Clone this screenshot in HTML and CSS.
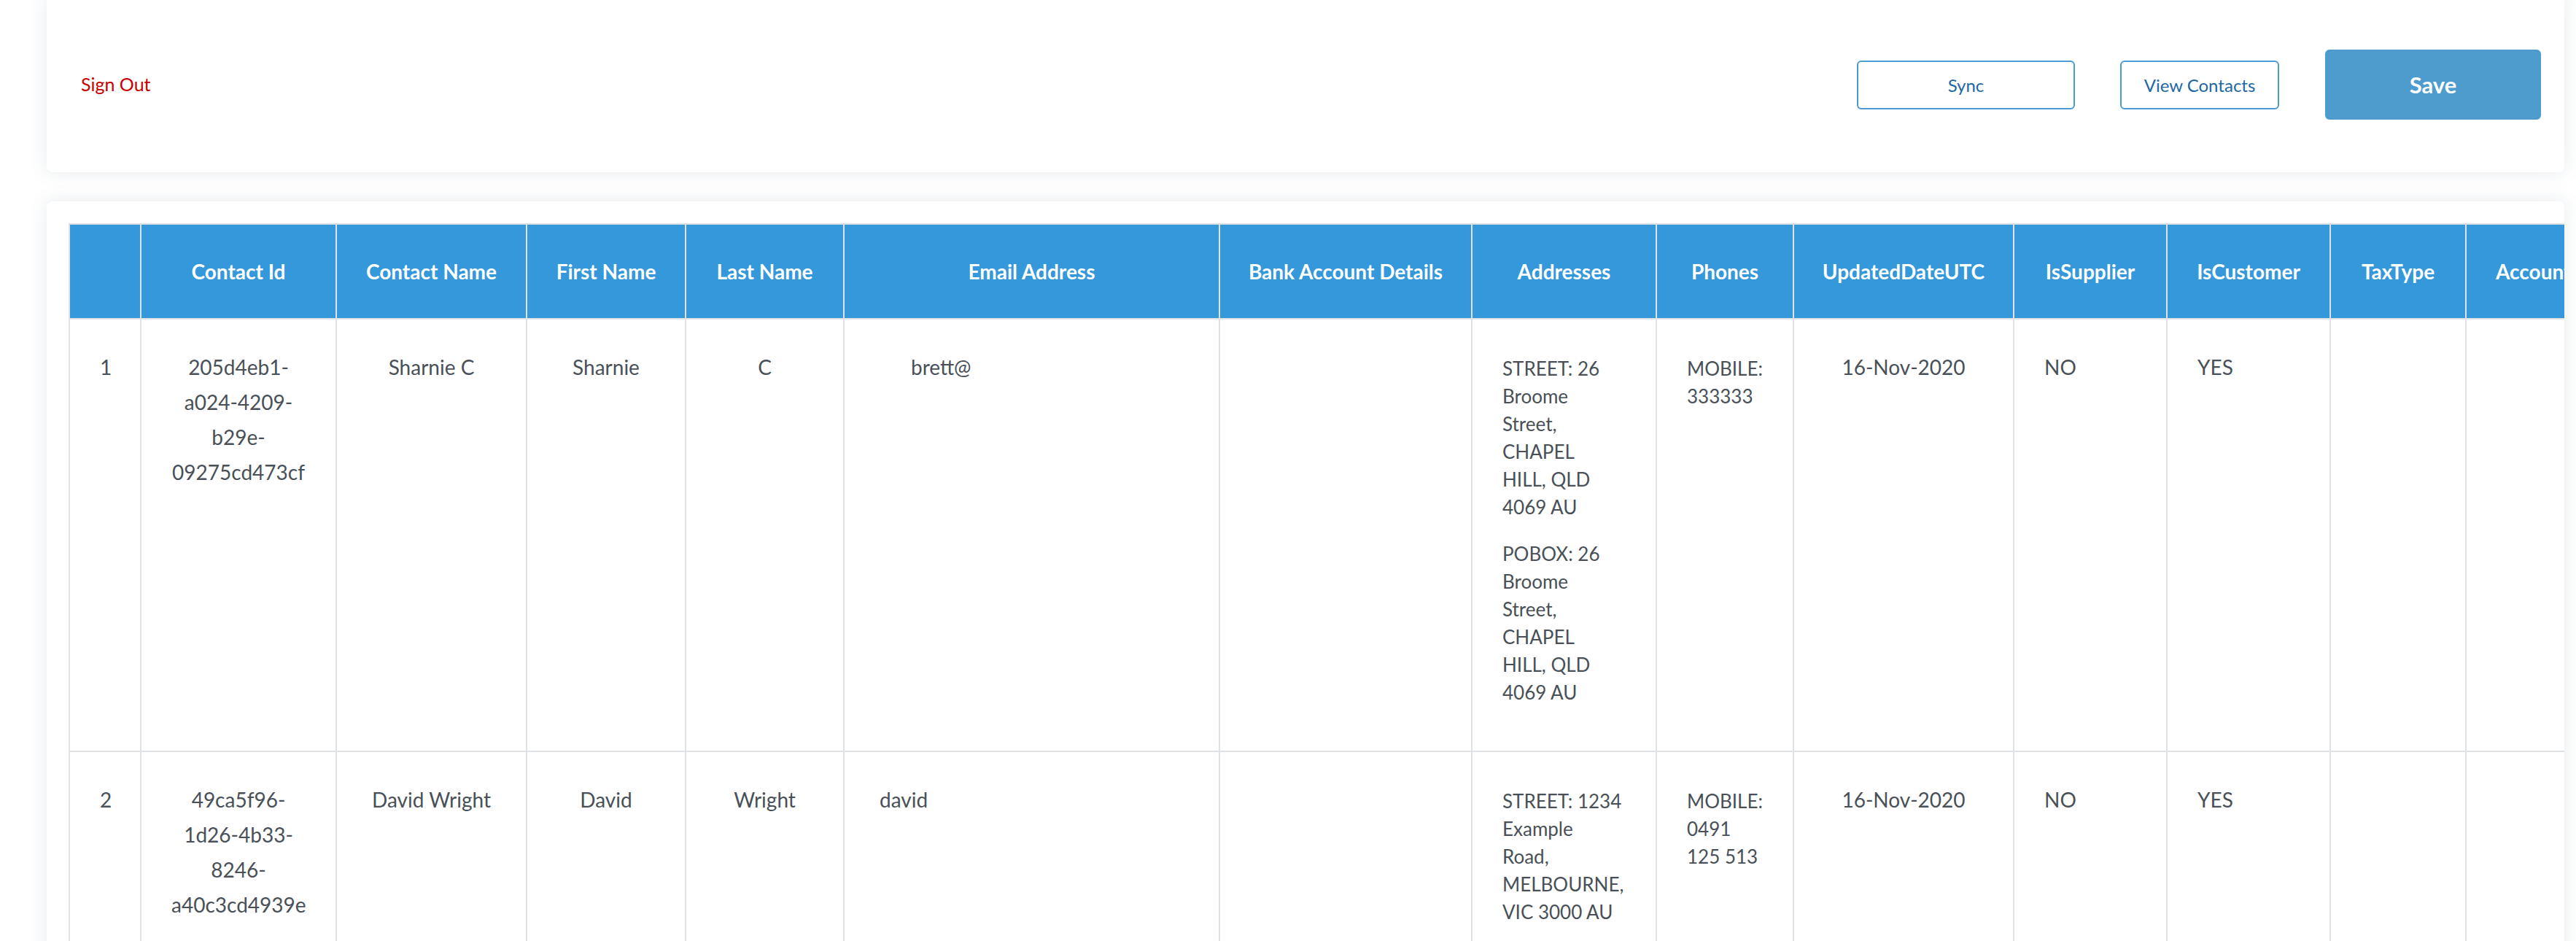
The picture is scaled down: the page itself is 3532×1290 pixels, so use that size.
FILE: index.html
```html
<!DOCTYPE html>
<html lang="en">
<head>
<meta charset="utf-8">
<title>Contacts</title>
<link rel="stylesheet" href="styles.css">
</head>
<body>
<div class="page">
  <header class="card topbar">
    <a class="signout" href="#">Sign Out</a>
    <div class="actions">
      <button class="btn btn-outline btn-sync" type="button">Sync</button>
      <button class="btn btn-outline btn-view" type="button">View Contacts</button>
      <button class="btn btn-primary btn-save" type="button">Save</button>
    </div>
  </header>

  <section class="card table-card">
    <table class="contacts">
      <thead>
        <tr>
          <th class="w-num"></th>
          <th class="w-id">Contact Id</th>
          <th class="w-name">Contact Name</th>
          <th class="w-first">First Name</th>
          <th class="w-last">Last Name</th>
          <th class="w-email">Email Address</th>
          <th class="w-bank">Bank Account Details</th>
          <th class="w-addr">Addresses</th>
          <th class="w-phone">Phones</th>
          <th class="w-date">UpdatedDateUTC</th>
          <th class="w-sup">IsSupplier</th>
          <th class="w-cus">IsCustomer</th>
          <th class="w-tax">TaxType</th>
          <th class="w-acc">AccountNumber</th>
        </tr>
      </thead>
      <tbody>
        <tr>
          <td class="center">1</td>
          <td class="center">205d4eb1-a024-4209-b29e-09275cd473cf</td>
          <td class="center">Sharnie C</td>
          <td class="center">Sharnie</td>
          <td class="center">C</td>
          <td class="email email-a">brett@</td>
          <td></td>
          <td class="multi">
            <div class="stack">
              <p>STREET: 26<br>Broome<br>Street,<br>CHAPEL<br>HILL, QLD<br>4069 AU</p>
              <p>POBOX: 26<br>Broome<br>Street,<br>CHAPEL<br>HILL, QLD<br>4069 AU</p>
            </div>
          </td>
          <td class="multi">
            <div class="stack">
              <p>MOBILE:<br>333333</p>
            </div>
          </td>
          <td class="center">16-Nov-2020</td>
          <td>NO</td>
          <td>YES</td>
          <td></td>
          <td></td>
        </tr>
        <tr>
          <td class="center">2</td>
          <td class="center">49ca5f96-1d26-4b33-8246-a40c3cd4939e</td>
          <td class="center">David Wright</td>
          <td class="center">David</td>
          <td class="center">Wright</td>
          <td class="email email-b">david</td>
          <td></td>
          <td class="multi">
            <div class="stack">
              <p>STREET: 1234<br>Example<br>Road,<br>MELBOURNE,<br>VIC 3000 AU</p>
            </div>
          </td>
          <td class="multi">
            <div class="stack">
              <p>MOBILE:<br>0491<br>125 513</p>
            </div>
          </td>
          <td class="center">16-Nov-2020</td>
          <td>NO</td>
          <td>YES</td>
          <td></td>
          <td></td>
        </tr>
      </tbody>
    </table>
  </section>
</div>
</body>
</html>
```

FILE: styles.css
```css
html, body {
  margin: 0;
  padding: 0;
  background: #ffffff;
}

body {
  font-family: Lato, "Open Sans", sans-serif;
  color: #495057;
  overflow: hidden;
}

.page {
  padding: 0 16px 0 64px;
}

.card {
  background: #ffffff;
  border-radius: 8px;
  box-shadow: 0 0 26px rgba(70, 100, 130, 0.13);
}

/* ---------- top bar ---------- */
.topbar {
  box-sizing: border-box;
  margin-top: -10px;
  height: 246px;
  padding: 10px 32px 7px 47px;
  display: flex;
  align-items: center;
  justify-content: space-between;
}

.signout {
  color: #c80000;
  font-size: 25px;
  text-decoration: none;
}

.actions {
  display: flex;
  align-items: center;
  gap: 62px;
  padding-top: 3px;
}

.btn {
  box-sizing: border-box;
  font-family: Lato, "Open Sans", sans-serif;
  border-radius: 6px;
  cursor: pointer;
  padding: 0;
}

.btn-outline {
  height: 67px;
  background: #ffffff;
  border: 2px solid #4b9bd1;
  color: #1d67a3;
  font-size: 24px;
}

.btn-sync { width: 299px; }
.btn-view { width: 218px; }

.btn-primary {
  width: 296px;
  height: 96px;
  margin-left: 1px;
  background: #4e9ccd;
  border: none;
  color: #ffffff;
  font-size: 31px;
  font-weight: 700;
}

/* ---------- table card ---------- */
.table-card {
  margin-top: 40px;
  padding: 30px;
  height: 1200px;
  overflow: hidden;
}

.contacts {
  table-layout: fixed;
  width: 3588px;
  border-collapse: separate;
  border-spacing: 0;
  border-left: 2px solid #dee2e6;
  border-top: 2px solid #dee2e6;
}

.contacts th,
.contacts td {
  box-sizing: border-box;
  border-right: 2px solid #dee2e6;
  border-bottom: 2px solid #dee2e6;
}

.contacts th {
  height: 130px;
  padding: 0 10px;
  background: #3498db;
  color: #ffffff;
  font-size: 28px;
  font-weight: 700;
  text-align: center;
  vertical-align: middle;
  white-space: nowrap;
  overflow: hidden;
}

.contacts th.w-acc {
  text-align: left;
  padding-left: 40px;
}

.w-num   { width: 98px; }
.w-id    { width: 268px; }
.w-name  { width: 261px; }
.w-first { width: 218px; }
.w-last  { width: 217px; }
.w-email { width: 515px; }
.w-bank  { width: 346px; }
.w-addr  { width: 253px; }
.w-phone { width: 188px; }
.w-date  { width: 302px; }
.w-sup   { width: 210px; }
.w-cus   { width: 224px; }
.w-tax   { width: 186px; }
.w-acc   { width: 300px; }

.contacts td {
  padding: 41px 41px 35px;
  font-size: 28px;
  line-height: 48px;
  vertical-align: top;
  text-align: left;
}

.contacts td.center {
  text-align: center;
}

.contacts td.email-a { padding-left: 91px; }
.contacts td.email-b { padding-left: 48px; }

.stack {
  margin-top: 7px;
  font-size: 26px;
  line-height: 38px;
  white-space: nowrap;
}

.stack p {
  margin: 0 0 26px;
}
```
